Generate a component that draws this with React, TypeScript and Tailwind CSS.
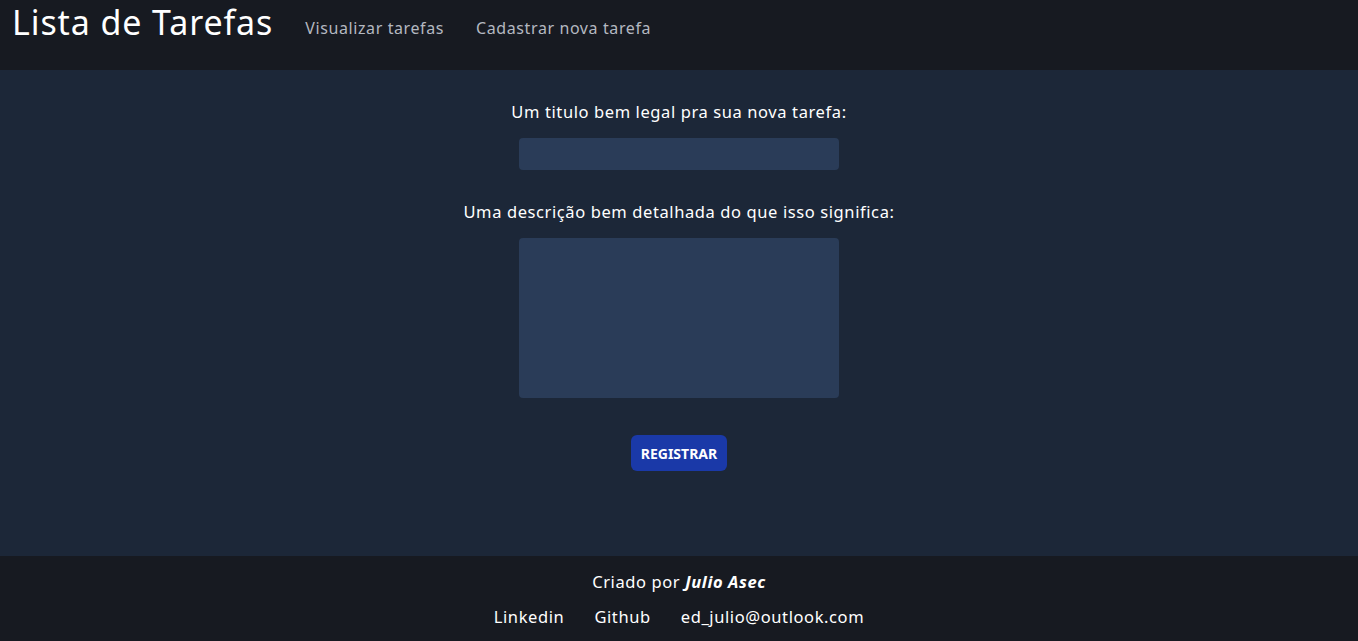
export default function App() {
  return (
    <div className="min-h-screen flex flex-col bg-[#1c2738] text-white" style={{ fontFamily: '"Noto Sans", sans-serif' }}>
      <header className="h-[70px] bg-[#171a21] flex items-start px-3 shrink-0">
        <h1 className="text-[34px] leading-[44px] tracking-[0.9px] text-white">Lista de Tarefas</h1>
        <nav className="flex gap-8 ml-8 mt-[16px]">
          <a className="text-[16px] tracking-[0.6px] text-[#b4b8c0]">Visualizar tarefas</a>
          <a className="text-[16px] tracking-[0.6px] text-[#b4b8c0]">Cadastrar nova tarefa</a>
        </nav>
      </header>

      <main className="h-[486px] flex flex-col items-center pt-[30px]">
        <label className="text-[16.5px] leading-6 tracking-[0.6px]">Um titulo bem legal pra sua nova tarefa:</label>
        <input className="mt-[14px] w-[320px] h-[32px] rounded bg-[#2a3c58]" />
        <label className="mt-[30px] text-[16.5px] leading-6 tracking-[0.6px]">Uma descrição bem detalhada do que isso significa:</label>
        <textarea className="mt-[14px] w-[320px] h-[160px] rounded bg-[#2a3c58] resize-none" />
        <button className="mt-[37px] w-[96px] h-[36px] rounded-md bg-[#1a39a8] text-[14px] font-bold">REGISTRAR</button>
      </main>

      <footer className="flex-1 bg-[#171a21] flex flex-col items-center pt-[14px]">
        <p className="text-[16.5px] leading-6 tracking-[0.6px]">
          Criado por <span className="font-bold italic">Julio Asec</span>
        </p>
        <div className="flex gap-[30px] mt-[11px] text-[16.5px] leading-6 tracking-[0.6px]">
          <a>Linkedin</a>
          <a>Github</a>
          <a>ed_julio@outlook.com</a>
        </div>
      </footer>
    </div>
  );
}
